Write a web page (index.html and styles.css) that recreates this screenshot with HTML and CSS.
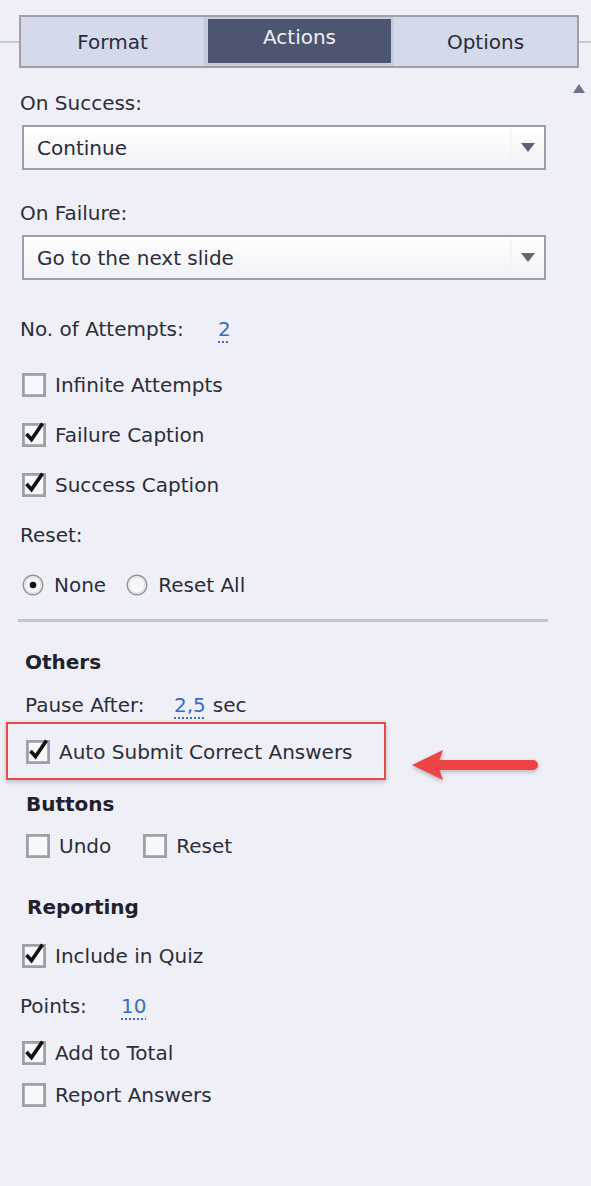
FILE: index.html
```html
<!DOCTYPE html>
<html>
<head>
<meta charset="utf-8">
<title>Actions</title>
<link rel="stylesheet" href="styles.css">
</head>
<body>
<div class="panel">
  <div class="tabbar">
    <div class="tabline"></div>
    <div class="tabs">
      <div class="tab">Format</div>
      <div class="tab active">Actions</div>
      <div class="tab">Options</div>
    </div>
    <div class="tabline"></div>
  </div>
  <div class="scroll-up"></div>

  <div class="content">
    <div class="label success-label">On Success:</div>
    <div class="dropdown">
      <span class="dd-text">Continue</span>
      <span class="dd-sep"></span>
      <span class="dd-arrow"></span>
    </div>

    <div class="label failure-label">On Failure:</div>
    <div class="dropdown">
      <span class="dd-text">Go to the next slide</span>
      <span class="dd-sep"></span>
      <span class="dd-arrow"></span>
    </div>

    <div class="row attempts-row">
      <span class="field-label attempts-label">No. of Attempts:</span>
      <span class="val">2</span>
    </div>

    <div class="row cb-row infinite-row">
      <svg class="cb" viewBox="0 0 24 24" width="24" height="24"><rect x="1.4" y="1.4" width="21.2" height="21.2" fill="#f7f8fb" stroke="#9d9fa9" stroke-width="2.8"/></svg>
      <span>Infinite Attempts</span>
    </div>
    <div class="row cb-row step-row">
      <svg class="cb" viewBox="0 0 24 24" width="24" height="24"><rect x="1.4" y="1.4" width="21.2" height="21.2" fill="#f7f8fb" stroke="#9d9fa9" stroke-width="2.8"/><path d="M4.5 11 L9.5 16.5 L20.5 0.5" fill="none" stroke="#111" stroke-width="3.6"/></svg>
      <span>Failure Caption</span>
    </div>
    <div class="row cb-row step-row">
      <svg class="cb" viewBox="0 0 24 24" width="24" height="24"><rect x="1.4" y="1.4" width="21.2" height="21.2" fill="#f7f8fb" stroke="#9d9fa9" stroke-width="2.8"/><path d="M4.5 11 L9.5 16.5 L20.5 0.5" fill="none" stroke="#111" stroke-width="3.6"/></svg>
      <span>Success Caption</span>
    </div>

    <div class="row step-row">Reset:</div>
    <div class="row radio-row step-row">
      <svg class="radio" viewBox="0 0 22 22" width="22" height="22"><circle cx="11" cy="11" r="9.8" fill="#f6f7fa" stroke="#8f919b" stroke-width="1.4"/><circle cx="11" cy="11" r="8" fill="none" stroke="#e2e3e9" stroke-width="1.5"/><circle cx="11" cy="11" r="3.3" fill="#111"/></svg>
      <span class="radio-text">None</span>
      <svg class="radio radio-second" viewBox="0 0 22 22" width="22" height="22"><circle cx="11" cy="11" r="9.8" fill="#f6f7fa" stroke="#8f919b" stroke-width="1.4"/><circle cx="11" cy="11" r="8" fill="none" stroke="#e2e3e9" stroke-width="1.5"/></svg>
      <span class="radio-text">Reset All</span>
    </div>

    <div class="divider"></div>

    <div class="row heading others-heading">Others</div>
    <div class="row pause-row">
      <span class="field-label pause-label">Pause After:</span>
      <span class="val">2,5</span>
      <span class="unit">sec</span>
    </div>

    <div class="flag-row">
      <div class="flag-box">
        <svg class="cb" viewBox="0 0 24 24" width="24" height="24"><rect x="1.4" y="1.4" width="21.2" height="21.2" fill="#f7f8fb" stroke="#9d9fa9" stroke-width="2.8"/><path d="M4.5 11 L9.5 16.5 L20.5 0.5" fill="none" stroke="#111" stroke-width="3.6"/></svg>
        <span>Auto Submit Correct Answers</span>
      </div>
      <svg class="arrow" viewBox="0 0 128 32" width="128" height="32"><path d="M1 16 L32 1 L28.5 11 L122 11 A5 5 0 0 1 122 21 L28.5 21 L32 31 Z" fill="#ef4345"/></svg>
    </div>

    <div class="row heading buttons-heading">Buttons</div>
    <div class="row cb-row buttons-row">
      <svg class="cb" viewBox="0 0 24 24" width="24" height="24"><rect x="1.4" y="1.4" width="21.2" height="21.2" fill="#f7f8fb" stroke="#9d9fa9" stroke-width="2.8"/></svg>
      <span>Undo</span>
      <svg class="cb cb-second" viewBox="0 0 24 24" width="24" height="24"><rect x="1.4" y="1.4" width="21.2" height="21.2" fill="#f7f8fb" stroke="#9d9fa9" stroke-width="2.8"/></svg>
      <span>Reset</span>
    </div>

    <div class="row heading reporting-heading">Reporting</div>
    <div class="row cb-row include-row">
      <svg class="cb" viewBox="0 0 24 24" width="24" height="24"><rect x="1.4" y="1.4" width="21.2" height="21.2" fill="#f7f8fb" stroke="#9d9fa9" stroke-width="2.8"/><path d="M4.5 11 L9.5 16.5 L20.5 0.5" fill="none" stroke="#111" stroke-width="3.6"/></svg>
      <span>Include in Quiz</span>
    </div>
    <div class="row points-row">
      <span class="field-label points-label">Points:</span>
      <span class="val">10</span>
    </div>
    <div class="row cb-row total-row">
      <svg class="cb" viewBox="0 0 24 24" width="24" height="24"><rect x="1.4" y="1.4" width="21.2" height="21.2" fill="#f7f8fb" stroke="#9d9fa9" stroke-width="2.8"/><path d="M4.5 11 L9.5 16.5 L20.5 0.5" fill="none" stroke="#111" stroke-width="3.6"/></svg>
      <span>Add to Total</span>
    </div>
    <div class="row cb-row report-row">
      <svg class="cb" viewBox="0 0 24 24" width="24" height="24"><rect x="1.4" y="1.4" width="21.2" height="21.2" fill="#f7f8fb" stroke="#9d9fa9" stroke-width="2.8"/></svg>
      <span>Report Answers</span>
    </div>
  </div>
</div>
</body>
</html>
```

FILE: styles.css
```css
html, body {
  margin: 0;
  padding: 0;
  background: #eff0f7;
}

body {
  font-family: "DejaVu Sans", "Liberation Sans", sans-serif;
  font-size: 20px;
  color: #2b2d3a;
}

.panel {
  position: relative;
  width: 591px;
  height: 1186px;
  overflow: hidden;
}

/* Tabs */
.tabbar {
  display: flex;
  margin-top: 15px;
  height: 53px;
}

.tabline {
  flex: 1;
  background: linear-gradient(to bottom, transparent 26px, #c9cbd3 26px, #c9cbd3 28px, transparent 28px);
}

.tabline:first-child {
  flex: 0 0 19px;
}

.tabs {
  flex: 0 0 560px;
  box-sizing: border-box;
  display: flex;
  border: 2px solid #9ea1ac;
  background: #d5daea;
}

.tab {
  flex: 1;
  display: flex;
  align-items: center;
  justify-content: center;
  color: #2a2c3a;
  border-right: 1px solid #c3c7d4;
}

.tab:last-child {
  border-right: none;
}

.tab.active {
  background: #4d5670;
  color: #eef0f5;
  border: 3px solid #c8ccd8;
  border-top-width: 2px;
  padding-bottom: 9px;
}

.scroll-up {
  position: absolute;
  left: 573px;
  top: 84px;
  width: 0;
  height: 0;
  border-left: 6.5px solid transparent;
  border-right: 6.5px solid transparent;
  border-bottom: 9px solid #6e7388;
}

/* Content */
.content {
  padding-left: 20px;
}

.label {
  height: 24px;
  line-height: 24px;
}

.success-label { margin-top: 23px; }
.failure-label { margin-top: 31px; }

.dropdown {
  box-sizing: border-box;
  margin-top: 10px;
  margin-left: 2px;
  width: 524px;
  height: 45px;
  border: 2px solid #9c9fab;
  background: linear-gradient(to bottom, #ffffff, #f1f2f7);
  display: flex;
  align-items: center;
  color: #2a2c38;
}

.dd-text {
  padding-left: 13px;
}

.dd-sep {
  margin-left: auto;
  width: 2px;
  height: 37px;
  background: linear-gradient(to right, #eef0f5, #f6f7fa);
}

.dd-arrow {
  margin-left: 9px;
  margin-right: 9px;
  width: 0;
  height: 0;
  border-left: 7px solid transparent;
  border-right: 7px solid transparent;
  border-top: 9px solid #5f6479;
}

.row {
  display: flex;
  align-items: center;
  height: 24px;
  white-space: nowrap;
}

.field-label {
  display: inline-block;
}

.attempts-label { width: 198px; }
.pause-label { width: 149px; }
.points-label { width: 101px; }

.val {
  color: #3a6cc9;
  text-decoration: underline dotted #3a6cc9;
  text-decoration-thickness: 2px;
  text-underline-offset: 5px;
}

.unit {
  margin-left: 7px;
}

.attempts-row { margin-top: 37px; }
.infinite-row { margin-top: 32px; }
.step-row { margin-top: 26px; }

.cb {
  flex: 0 0 auto;
  overflow: visible;
  margin-left: 2px;
  margin-right: 9px;
}

.cb-second {
  margin-left: 32px;
}

.radio {
  flex: 0 0 auto;
  margin-left: 2px;
  margin-right: 10px;
}

.radio-second {
  margin-left: 20px;
}

.divider {
  margin-top: 22px;
  margin-left: -2px;
  width: 530px;
  height: 3px;
  background: #c3c5ce;
}

.heading {
  font-weight: bold;
  color: #1f212b;
}

.others-heading {
  margin-top: 28px;
  padding-left: 5px;
}

.pause-row {
  margin-top: 19px;
  padding-left: 5px;
}

.flag-row {
  display: flex;
  align-items: flex-end;
  margin-top: 5px;
  margin-left: -14px;
}

.flag-box {
  box-sizing: border-box;
  width: 380px;
  height: 58px;
  border: 2px solid #e9484b;
  box-shadow: 0 2px 5px rgba(0, 0, 0, 0.22);
  display: flex;
  align-items: center;
  padding-left: 16px;
  padding-top: 2px;
  white-space: nowrap;
}

.arrow {
  margin-left: 25px;
  margin-bottom: -1px;
  filter: drop-shadow(0 2px 2px rgba(0, 0, 0, 0.25));
}

.buttons-heading {
  margin-top: 12px;
  padding-left: 6px;
}

.buttons-row {
  margin-top: 18px;
  padding-left: 4px;
}

.reporting-heading {
  margin-top: 37px;
  padding-left: 7px;
}

.include-row { margin-top: 25px; }
.points-row { margin-top: 26px; }
.total-row { margin-top: 23px; }
.report-row { margin-top: 18px; }
```
